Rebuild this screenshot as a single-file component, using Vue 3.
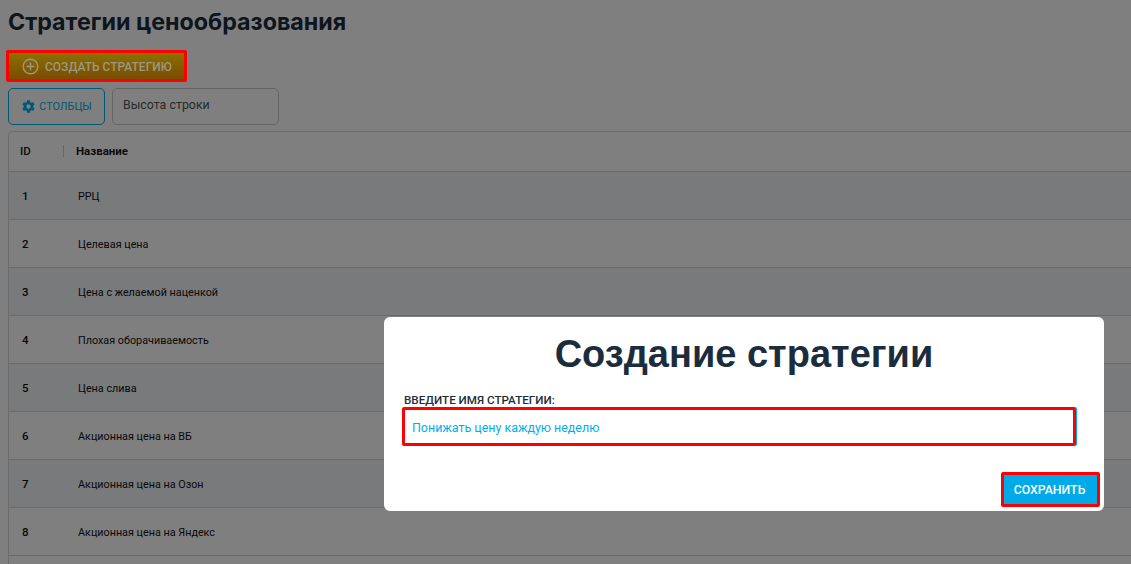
<script setup>
const rows = ['РРЦ','Целевая цена','Цена с желаемой наценкой','Плохая оборачиваемость','Цена слива','Акционная цена на ВБ','Акционная цена на Озон','Акционная цена на Яндекс']
</script>

<template>
  <div class="page">
    <h1 class="title">Стратегии ценообразования</h1>
    <div class="create-wrap">
      <button class="create">
        <svg width="17" height="17" viewBox="0 0 17 17" fill="none" stroke="#9a9884" stroke-width="1.4"><circle cx="8.5" cy="8.5" r="7.3"/><path d="M8.5 4.5v8M4.5 8.5h8"/></svg>
        <span>СОЗДАТЬ СТРАТЕГИЮ</span>
      </button>
    </div>
    <div class="tools">
      <button class="cols">
        <svg width="15" height="15" viewBox="0 0 24 24" fill="#00aeef"><path d="M19.4 13c.05-.33.1-.66.1-1s-.05-.67-.1-1l2.1-1.65c.2-.15.25-.42.12-.64l-2-3.46c-.12-.22-.39-.3-.61-.22l-2.49 1c-.52-.4-1.08-.73-1.69-.98l-.38-2.65A.49.49 0 0 0 14 2h-4c-.25 0-.46.18-.49.42l-.38 2.65c-.61.25-1.17.59-1.69.98l-2.49-1a.5.5 0 0 0-.61.22l-2 3.46c-.13.22-.07.49.12.64L4.57 11c-.04.33-.07.66-.07 1s.03.67.07 1l-2.11 1.65c-.19.15-.25.42-.12.64l2 3.46c.12.22.39.3.61.22l2.49-1c.52.4 1.08.73 1.69.98l.38 2.65c.03.24.24.42.49.42h4c.25 0 .46-.18.49-.42l.38-2.65c.61-.25 1.17-.59 1.69-.98l2.49 1c.23.09.49 0 .61-.22l2-3.46c.12-.22.07-.49-.12-.64zM12 15.5a3.5 3.5 0 1 1 0-7 3.5 3.5 0 0 1 0 7z"/></svg>
        <span>СТОЛБЦЫ</span>
      </button>
      <div class="height">Высота строки</div>
    </div>
    <div class="table">
      <div class="head">
        <div class="c-id">ID</div>
        <i class="sep"></i>
        <div class="c-name">Название</div>
      </div>
      <div v-for="(r, i) in rows" :key="i" class="row" :class="{ odd: i % 2 === 0 }">
        <div class="r-id">{{ i + 1 }}</div>
        <div class="r-name">{{ r }}</div>
      </div>
    </div>

    <div class="overlay">
      <div class="modal">
        <h2 class="modal-title">Создание стратегии</h2>
        <div class="label">ВВЕДИТЕ ИМЯ СТРАТЕГИИ:</div>
        <div class="input">Понижать цену каждую неделю</div>
        <div class="foot"><button class="save">СОХРАНИТЬ</button></div>
      </div>
    </div>
  </div>
</template>

<style>
html, body { margin: 0; height: 100%; overflow: hidden; background: #fff; }
</style>

<style scoped>
.page { position: relative; width: 1131px; height: 564px; overflow: hidden; padding: 8px 0 0 8px; box-sizing: border-box; font-family: Roboto, "Liberation Sans", sans-serif; color: #1b2a38; }
button { font-family: inherit; cursor: pointer; }
.title { margin: 0; font-family: Inter, Roboto, sans-serif; font-size: 23.25px; line-height: 28px; font-weight: 700; color: #1b2a3a; }
.create-wrap { position: relative; z-index: 2; margin: 14px 0 0 -2px; width: 181px; height: 32px; box-sizing: border-box; border: 3px solid #f00; border-radius: 2px; }
.create { width: 100%; height: 100%; border: 0; background: linear-gradient(#8c7000, #7a4c00); color: #9a9884; display: flex; align-items: center; gap: 6px; padding: 1px 0 0 13px; font-size: 12px; font-weight: 500; }
.tools { display: flex; gap: 7px; margin-top: 6px; }
.cols { width: 97px; height: 37px; border: 1px solid #00aeef; border-radius: 5px; background: #fff; color: #00aeef; display: flex; align-items: center; justify-content: center; gap: 3px; font-size: 10.9px; padding: 0 0 1px; }
.height { width: 167px; height: 37px; box-sizing: border-box; border: 1px solid #c8c8c8; border-radius: 5px; padding: 0 10px 4px; display: flex; align-items: center; font-size: 12.4px; color: #555; }
.table { margin-top: 6px; height: 440px; border: 1px solid #d9d9d9; border-right: 0; border-radius: 5px 0 0 0; width: 1130px; }
.head { height: 40px; box-sizing: border-box; padding-bottom: 2px; border-bottom: 1px solid #d2d2d2; display: flex; align-items: center; font-size: 11.5px; font-weight: 700; color: #1a1a1a; }
.c-id { width: 54px; padding-left: 11px; box-sizing: border-box; font-weight: 500; }
.sep { width: 1px; height: 12px; background: #ccc; }
.c-name { padding-left: 12px; }
.row { height: 47px; border-bottom: 1px solid #d2d2d2; display: flex; align-items: center; font-size: 10.8px; color: #111; background: #fff; }
.row.odd { background: #f1f4f8; }
.r-id { width: 69px; padding-left: 13px; box-sizing: border-box; font-weight: 500; font-size: 11.5px; }
.r-name { padding-top: 1px; }
.overlay { position: absolute; inset: 0; background: rgba(0, 0, 0, .5); }
.modal { position: absolute; left: 384px; top: 317px; width: 720px; height: 194px; background: #fff; border-radius: 6px; box-sizing: border-box; padding: 0 4px 0 20px; }
.modal-title { margin: 13px 0 0 -20px; width: 720px; text-align: center; font-size: 38px; line-height: 48px; font-weight: 700; color: #1b2d3d; font-family: "Liberation Sans", Arial, sans-serif; }
.label { margin-top: 15px; font-size: 11.65px; line-height: 14px; font-weight: 500; color: #1f2d3a; }
.input { margin-top: 0; margin-left: -2px; width: 674px; height: 39px; box-sizing: border-box; border: 3px solid #f00; border-radius: 2px; padding: 1px 0 0 7px; display: flex; align-items: center; font-size: 12.45px; color: #00aeef; box-shadow: 1px 0 0 #00aeef; }
.foot { display: flex; justify-content: flex-end; margin-top: 26px; }
.save { width: 99px; height: 35px; box-sizing: border-box; border: 3px solid #f00; border-radius: 2px; background: #00aae8; color: #fff; font-size: 12.3px; font-weight: 500; padding: 0 2px 0 0; }
</style>
